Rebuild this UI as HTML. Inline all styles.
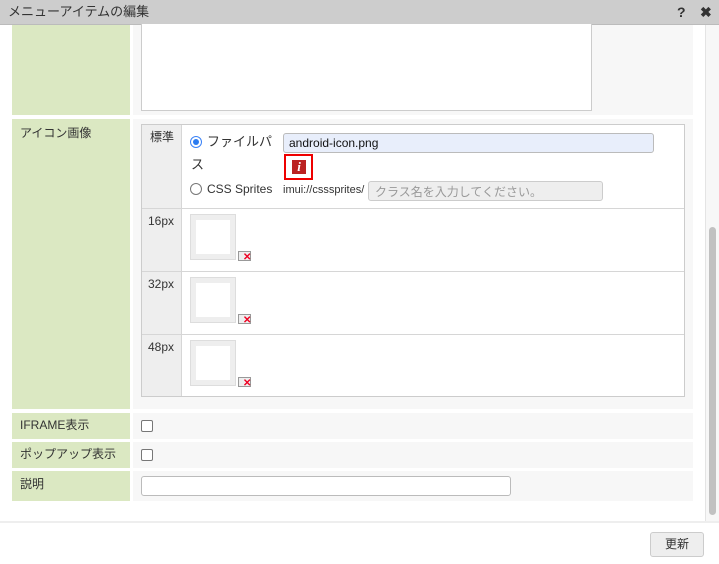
<!DOCTYPE html>
<html><head><meta charset="utf-8"><style>
*{box-sizing:border-box;margin:0;padding:0}
body{width:719px;height:564px;overflow:hidden;background:#fff;font-family:"Liberation Sans","Noto Sans CJK JP",sans-serif;font-size:12px;line-height:14px;color:#333;position:relative}
.abs{position:absolute}
.title{left:0;top:0;width:719px;height:25px;background:#cdcdcd;border-bottom:1px solid #bbb}
.lab{background:#dbe8c2;left:12px;width:118px}
.cnt{background:#f7f7f7;left:133px;width:560px}
.cell{border-top:1px solid #d6d6d6}
.thumb{width:46px;height:46px;background:#eee;border:1px solid #ddd}
.thumb div{position:absolute;left:5px;top:5px;width:34px;height:34px;background:#fff}
.del{width:13px;height:10px;border:1px solid #999;background:#eee}
.cb{width:12px;height:12px;border:1px solid #777;border-radius:2px;background:#fff}
</style></head><body>
<div class="abs title"><span class="abs" style="left:8px;top:4px;font-size:13px;line-height:15px;color:#333">メニューアイテムの編集</span>
<span class="abs" style="left:677px;top:5px;font-weight:bold;font-size:14px;line-height:15px">?</span>
<span class="abs" style="left:700px;top:5px;font-weight:bold;font-size:14px;line-height:15px">✖</span></div>

<div class="abs lab" style="top:25px;height:90px"></div>
<div class="abs cnt" style="top:25px;height:90px"></div>
<div class="abs" style="left:141px;top:24px;width:451px;height:87px;background:#fff;border:1px solid #ccc;border-top:none"></div>

<div class="abs lab" style="top:119px;height:290px"><span class="abs" style="left:8px;top:7px">アイコン画像</span></div>
<div class="abs cnt" style="top:119px;height:290px"></div>
<div class="abs" style="left:141px;top:124px;width:544px;height:273px;background:#fff;border:1px solid #ccc"></div>
<div class="abs" style="left:142px;top:125px;width:40px;height:271px;background:#eee;border-right:1px solid #d6d6d6"></div>
<div class="abs cell" style="left:142px;top:208px;width:542px"></div>
<div class="abs cell" style="left:142px;top:271px;width:542px"></div>
<div class="abs cell" style="left:142px;top:334px;width:542px"></div>
<span class="abs" style="left:150px;top:130px">標準</span>
<span class="abs" style="left:148px;top:214px">16px</span>
<span class="abs" style="left:148px;top:277px">32px</span>
<span class="abs" style="left:148px;top:340px">48px</span>

<div class="abs" style="left:190px;top:136px;width:12px;height:12px;border-radius:50%;border:1px solid #3b82f6;background:#fff"><div class="abs" style="left:2px;top:2px;width:6px;height:6px;border-radius:50%;background:#2b7bf0"></div></div>
<span class="abs" style="left:207px;top:134px;font-size:13px;line-height:15px">ファイルパ</span>
<span class="abs" style="left:191px;top:157px;font-size:13px;line-height:15px">ス</span>
<div class="abs" style="left:283px;top:133px;width:371px;height:20px;background:#e8eefb;border:1px solid #bbb;border-radius:3px"><span class="abs" style="left:5px;top:2px;font-size:12px;color:#111">android-icon.png</span></div>
<div class="abs" style="left:284px;top:154px;width:29px;height:26px;border:2px solid #e00"><div class="abs" style="left:6px;top:4px;width:14px;height:14px;background:#b22;color:#fff;font:italic bold 13px 'Liberation Serif',serif;text-align:center;line-height:14px">i</div></div>
<div class="abs" style="left:190px;top:183px;width:12px;height:12px;border-radius:50%;border:1px solid #777;background:#fff"></div>
<span class="abs" style="left:207px;top:182px;font-size:12px">CSS Sprites</span>
<span class="abs" style="left:283px;top:183px;font-size:11px">imui://csssprites/</span>
<div class="abs" style="left:368px;top:181px;width:235px;height:20px;background:#eee;border:1px solid #ccc;border-radius:3px"><span class="abs" style="left:6px;top:3px;color:#999">クラス名を入力してください。</span></div>

<div class="abs thumb" style="left:190px;top:214px"><div></div></div>
<div class="abs del" style="left:238px;top:251px"></div><span class="abs" style="left:243px;top:253px;color:#e02;font-size:10px;line-height:10px;font-weight:bold">✕</span>
<div class="abs thumb" style="left:190px;top:277px"><div></div></div>
<div class="abs del" style="left:238px;top:314px"></div><span class="abs" style="left:243px;top:316px;color:#e02;font-size:10px;line-height:10px;font-weight:bold">✕</span>
<div class="abs thumb" style="left:190px;top:340px"><div></div></div>
<div class="abs del" style="left:238px;top:377px"></div><span class="abs" style="left:243px;top:379px;color:#e02;font-size:10px;line-height:10px;font-weight:bold">✕</span>

<div class="abs lab" style="top:413px;height:26px"><span class="abs" style="left:8px;top:5px">IFRAME表示</span></div>
<div class="abs cnt" style="top:413px;height:26px"></div>
<div class="abs cb" style="left:141px;top:420px"></div>
<div class="abs lab" style="top:442px;height:26px"><span class="abs" style="left:8px;top:5px">ポップアップ表示</span></div>
<div class="abs cnt" style="top:442px;height:26px"></div>
<div class="abs cb" style="left:141px;top:449px"></div>
<div class="abs lab" style="top:471px;height:30px"><span class="abs" style="left:8px;top:6px">説明</span></div>
<div class="abs cnt" style="top:471px;height:30px"></div>
<div class="abs" style="left:141px;top:476px;width:370px;height:20px;background:#fff;border:1px solid #bbb;border-radius:3px"></div>

<div class="abs" style="left:705px;top:25px;width:14px;height:496px;background:#f7f7f7;border-left:1px solid #e4e4e4"></div>
<div class="abs" style="left:709px;top:227px;width:7px;height:288px;background:#c1c1c1;border-radius:4px"></div>

<div class="abs" style="left:0;top:521px;width:719px;height:2px;background:#eee"></div>
<div class="abs" style="left:650px;top:532px;width:54px;height:25px;background:#eee;border:1px solid #ccc;border-radius:3px;text-align:center;line-height:23px;font-size:12px">更新</div>
</body></html>
